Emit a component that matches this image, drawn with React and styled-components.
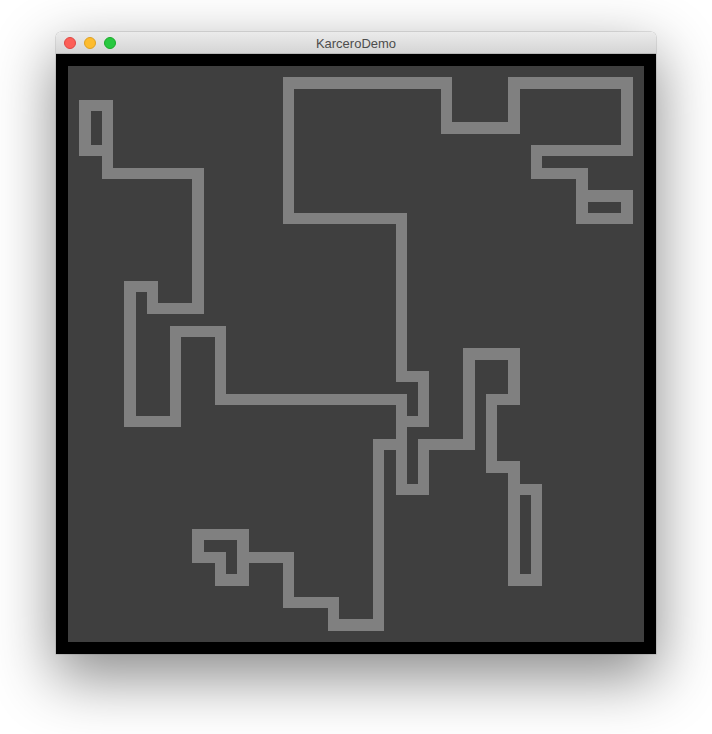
import styled, { createGlobalStyle } from "styled-components";

const GlobalStyle = createGlobalStyle`
    html, body {
        margin: 0;
        padding: 0;
        background: #ffffff;
    }
`
const Page = styled.div`
    width: 712px;
    height: 734px;
    padding: 32px 0 0 56px;
    box-sizing: border-box;
`
const Window = styled.div`
    width: 600px;
    border-radius: 5px 5px 0 0;
    box-shadow: 0 22px 60px 2px rgba(0, 0, 0, 0.45), 0 0 0 0.5px rgba(0, 0, 0, 0.2);
`
const TitleBar = styled.div`
    position: relative;
    height: 22px;
    display: flex;
    align-items: center;
    justify-content: center;
    border-radius: 5px 5px 0 0;
    background: linear-gradient(#ebebeb, #d5d5d5);
    border-bottom: 1px solid #b8b8b8;
    box-sizing: border-box;
`
const Lights = styled.div`
    position: absolute;
    left: 8px;
    top: 5px;
    display: flex;
    gap: 8px;
`
const Light = styled.span`
    width: 12px;
    height: 12px;
    border-radius: 50%;
    box-sizing: border-box;
    background: ${(p) => p.color};
    border: 0.5px solid ${(p) => p.edge};
`
const Title = styled.div`
    font-family: "Liberation Sans", Arial, sans-serif;
    font-size: 13px;
    color: #4d4d4d;
    margin-top: 1px;
`
const Content = styled.div`
    background: #000;
    padding: 12px;
`
const Board = styled.svg`
    display: block;
    width: 576px;
    height: 576px;
    background: #3f3f3f;
`

// maze walls, in grid cells (51 x 51)
const walls = [
    [[1, 3], [3, 3], [3, 7], [1, 7], [1, 3]],
    [[3, 7], [3, 9], [11, 9], [11, 21], [7, 21], [7, 19], [5, 19], [5, 31], [9, 31], [9, 23], [13, 23], [13, 29],
        [29, 29], [29, 37], [31, 37], [31, 33], [35, 33], [35, 25], [39, 25], [39, 29], [37, 29], [37, 35], [39, 35],
        [39, 45], [41, 45], [41, 37], [39, 37]],
    [[45, 11], [49, 11], [49, 13], [45, 13], [45, 9], [41, 9], [41, 7], [49, 7], [49, 1], [39, 1], [39, 5], [33, 5],
        [33, 1], [19, 1], [19, 13], [29, 13], [29, 27], [31, 27], [31, 31], [29, 31]],
    [[29, 33], [27, 33], [27, 49], [23, 49], [23, 47], [19, 47], [19, 43], [15, 43], [15, 45], [13, 45], [13, 43],
        [11, 43], [11, 41], [15, 41], [15, 43]],
]

const toPoints = (pts) => pts.map(([x, y]) => `${x + 0.5},${y + 0.5}`).join(" ")

export default function App() {
    return (
        <>
            <GlobalStyle />
            <Page>
                <Window>
                    <TitleBar>
                        <Lights>
                            <Light color="#fc5f57" edge="#df4744" />
                            <Light color="#fdbc2e" edge="#dea123" />
                            <Light color="#28c840" edge="#1aab29" />
                        </Lights>
                        <Title>KarceroDemo</Title>
                    </TitleBar>
                    <Content>
                        <Board viewBox="0 0 51 51" shapeRendering="crispEdges">
                            {walls.map((pts, i) => (
                                <polyline key={i} points={toPoints(pts)} fill="none" stroke="#808080"
                                    strokeWidth="1" strokeLinecap="square" strokeLinejoin="miter" />
                            ))}
                        </Board>
                    </Content>
                </Window>
            </Page>
        </>
    )
}
